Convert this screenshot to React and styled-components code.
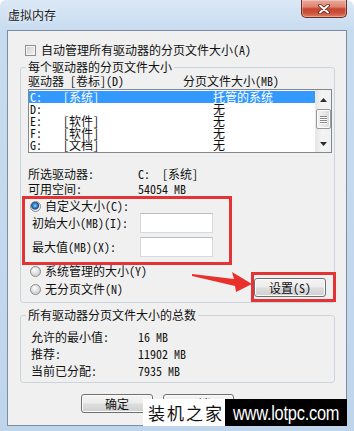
import React from "react";
import styled, { createGlobalStyle } from "styled-components";

const FONT = `"Noto Sans Mono CJK SC", "Noto Sans CJK SC", "DejaVu Sans", sans-serif`;
const RED = "#e23434";

const Global = createGlobalStyle`
  html, body { margin: 0; padding: 0; background: #ffffff; }
  body { width: 354px; height: 431px; overflow: hidden; font-family: ${FONT}; font-size: 12px; color: #111; }
  * { box-sizing: border-box; }
`;

const Window = styled.div`
  position: relative;
  width: 354px;
  height: 431px;
  display: flex;
  flex-direction: column;
  background: linear-gradient(180deg, #dbe8f6 0px, #c8dcf0 30px, #bfd5ec 100%);
  border-top-right-radius: 8px;
  border-top-left-radius: 6px;
  overflow: hidden;
`;

const TitleBar = styled.div`
  height: 30px;
  flex: none;
  display: flex;
  justify-content: space-between;
  align-items: flex-start;
  padding: 0 7px 0 8px;
`;

const Title = styled.div`
  line-height: 30px;
  font-size: 12px;
  color: #1a1a1a;
  text-shadow: 0 0 4px rgba(255, 255, 255, 0.9);
`;

const CloseButton = styled.div`
  width: 46px;
  height: 18px;
  border: 1px solid #6d2e26;
  border-top: none;
  border-radius: 0 0 5px 5px;
  background: linear-gradient(180deg, #eaa99b 0%, #de8572 40%, #c8452f 52%, #cc5039 75%, #dd8068 100%);
  box-shadow: inset 0 0 0 1px rgba(255, 255, 255, 0.3);
  display: flex;
  align-items: center;
  justify-content: center;
`;

const Client = styled.div`
  flex: 1;
  margin: 0 7px 5px 7px;
  border: 1px solid #7b8ea3;
  background: #f0f0f0;
  padding: 0 11px 0 12px;
  display: flex;
  flex-direction: column;
`;

const CheckRow = styled.div`
  margin: 12px 0 0 5px;
  height: 14px;
  line-height: 14px;
  display: flex;
  align-items: center;
  gap: 5px;
`;

const CheckBox = styled.span`
  width: 11px;
  height: 11px;
  flex: none;
  border: 1px solid #8e8f8f;
  background: linear-gradient(135deg, #cfcfcf 0%, #e6e6e6 60%, #f4f4f4 100%);
  box-shadow: inset 0 0 0 1px #f4f4f4;
`;

const Group = styled.fieldset`
  margin: ${(p) => p.$top}px 0 0 0;
  padding: 0;
  border: 1px solid #cdd5dc;
  border-radius: 3px;
  min-width: 0;
`;

const Legend = styled.legend`
  margin-left: 5px;
  padding: 0 2px;
  line-height: 12px;
  font-size: 12px;
`;

const GroupBody = styled.div`
  display: flex;
  flex-direction: column;
  padding: ${(p) => p.$pad};
`;

const Header = styled.div`
  display: grid;
  grid-template-columns: 155px 1fr;
  height: 12px;
  line-height: 12px;
  white-space: pre;
`;

const ListBox = styled.div`
  margin: 2px 1px 0 0;
  height: 64px;
  border: 1px solid #828790;
  background: #fff;
  display: flex;
`;

const Rows = styled.div`
  flex: 1;
  padding-top: 1px;
`;

const Row = styled.div`
  display: grid;
  grid-template-columns: 33px 150px 1fr;
  height: 12px;
  line-height: 12px;
  padding-left: 1px;
  white-space: pre;
  background: ${(p) => (p.$selected ? "#3399ff" : "transparent")};
  color: ${(p) => (p.$selected ? "#ffffff" : "#111")};
`;

const ScrollBar = styled.div`
  width: 16px;
  flex: none;
  display: flex;
  flex-direction: column;
  background: linear-gradient(90deg, #e6e6e6, #f4f4f4 40%, #f0f0f0);
  border-left: 1px solid #eaeaea;
`;

const ScrollButton = styled.div`
  height: 17px;
  flex: none;
  display: flex;
  align-items: center;
  justify-content: center;
  padding-top: ${(p) => (p.$up ? 3 : 0)}px;
`;

const Thumb = styled.div`
  margin: 2px 0 0 0;
  height: 20px;
  border: 1px solid #989898;
  border-radius: 2px;
  background: linear-gradient(90deg, #f4f4f4 0%, #e8e8e8 50%, #d9d9d9 100%);
  box-shadow: inset 0 0 0 1px #fbfbfb;
  display: flex;
  flex-direction: column;
  align-items: center;
  justify-content: center;
  gap: 1px;
`;

const Grip = styled.span`
  width: 7px;
  height: 1px;
  background: #8a8a8a;
  box-shadow: 0 1px 0 #ffffff;
`;

const Spacer = styled.div`
  flex: 1;
`;

const Info = styled.div`
  margin-top: 13px;
  display: grid;
  grid-template-columns: 110px 1fr;
  grid-auto-rows: 15px;
  line-height: 15px;
  white-space: pre;
`;

const CustomBox = styled.div`
  margin-left: -6px;
  width: 210px;
  border: 3px solid ${RED};
  padding: 0 16px 5px 5px;
  display: flex;
  flex-direction: column;
`;

const RadioRow = styled.div`
  height: ${(p) => p.$h}px;
  line-height: ${(p) => p.$h}px;
  display: flex;
  align-items: center;
  gap: 4px;
`;

const Radio = styled.span`
  width: 11px;
  height: 11px;
  flex: none;
  border-radius: 50%;
  border: 1px solid #8a8a8a;
  background: ${(p) =>
    p.$on
      ? "radial-gradient(circle at 45% 40%, #9fd0f7 0, #3d86cf 2px, #164f93 3.5px, #e9e9e9 4.5px, #f7f7f7 100%)"
      : "radial-gradient(circle at 40% 35%, #ffffff 0, #eeeeee 2px, #d4d4d4 5px)"};
`;

const FieldRow = styled.div`
  display: grid;
  grid-template-columns: 108px 73px;
  height: 20px;
  margin: ${(p) => p.$top}px 0 0 2px;
  align-items: center;
  line-height: 14px;
`;

const TextInput = styled.div`
  height: 20px;
  background: #fff;
  border: 1px solid #d6dbe0;
  border-top-color: #b8bec6;
`;

const BottomRow = styled.div`
  display: flex;
  justify-content: space-between;
  align-items: flex-start;
  margin: -3px -3px 0 0;
`;

const RadioList = styled.div`
  margin-left: 2px;
  display: flex;
  flex-direction: column;
`;

const SetBox = styled.div`
  margin-top: 10px;
  border: 3px solid ${RED};
  padding: 3px 7px 2px 0;
`;

const Button = styled.div`
  width: ${(p) => p.$w}px;
  height: 19px;
  border: 1px solid #707070;
  border-radius: 3px;
  background: linear-gradient(180deg, #f4f4f4 0%, #ececec 48%, #dedede 52%, #d0d0d0 100%);
  box-shadow: inset 0 0 0 1px #fbfbfb;
  display: flex;
  align-items: center;
  justify-content: center;
  line-height: 17px;
  color: #111;
`;

const Totals = styled.div`
  display: grid;
  grid-template-columns: 107px 1fr;
  grid-auto-rows: 17px;
  line-height: 17px;
  white-space: pre;
`;

const ButtonRow = styled.div`
  margin-top: 11px;
  padding-left: 61px;
  display: flex;
  gap: 10px;
`;

const Arrow = styled.svg`
  position: absolute;
  left: 188px;
  top: 268px;
`;

const Watermark = styled.div`
  position: absolute;
  left: 143px;
  top: 399px;
  width: 204px;
  height: 27px;
  display: flex;
`;

const WhiteTag = styled.div`
  width: 82px;
  background: #fff;
  color: #111;
  font-family: "Noto Sans CJK SC", sans-serif;
  font-size: 17px;
  letter-spacing: 2px;
  line-height: 27px;
  padding-left: 5px;
  white-space: nowrap;
`;

const BlackTag = styled.div`
  flex: 1;
  background: #000;
  color: #fff;
  overflow: hidden;
  line-height: 27px;
  padding-left: 8px;
`;

const Url = styled.span`
  display: inline-block;
  font-family: "Liberation Sans Narrow", "Liberation Sans", sans-serif;
  font-size: 21px;
  letter-spacing: -0.3px;
  transform: scaleX(0.78);
  transform-origin: left center;
  white-space: nowrap;
`;

const drives = [
  { d: "C:", l: "[系统]", s: "托管的系统", sel: true },
  { d: "D:", l: "", s: "无" },
  { d: "E:", l: "[软件]", s: "无" },
  { d: "F:", l: "[软件]", s: "无" },
  { d: "G:", l: "[文档]", s: "无" },
];

export default function App() {
  return (
    <>
      <Global />
      <Window>
        <TitleBar>
          <Title>虚拟内存</Title>
          <CloseButton>
            <svg width="12" height="10" viewBox="0 0 12 10">
              <path d="M2 1.5 L10 8.5 M10 1.5 L2 8.5" stroke="#5a2018" strokeWidth="3.6" strokeLinecap="round" />
              <path d="M2 1.5 L10 8.5 M10 1.5 L2 8.5" stroke="#ffffff" strokeWidth="2" strokeLinecap="round" />
            </svg>
          </CloseButton>
        </TitleBar>
        <Client>
          <CheckRow>
            <CheckBox />
            <span>自动管理所有驱动器的分页文件大小(A)</span>
          </CheckRow>

          <Group $top={4}>
            <Legend>每个驱动器的分页文件大小</Legend>
            <GroupBody $pad="2px 1px 0 7px">
              <Header>
                <span>驱动器 [卷标](D)</span>
                <span>分页文件大小(MB)</span>
              </Header>
              <ListBox>
                <Rows>
                  {drives.map((r) => (
                    <Row key={r.d} $selected={r.sel}>
                      <span>{r.d}</span>
                      <span>{r.l}</span>
                      <span>{r.s}</span>
                    </Row>
                  ))}
                </Rows>
                <ScrollBar>
                  <ScrollButton $up>
                    <svg width="7" height="4" viewBox="0 0 7 4">
                      <polygon points="0,4 3.5,0 7,4" fill="#2b2b2b" />
                    </svg>
                  </ScrollButton>
                  <Thumb>
                    <Grip />
                    <Grip />
                    <Grip />
                    <Grip />
                  </Thumb>
                  <Spacer />
                  <ScrollButton>
                    <svg width="7" height="4" viewBox="0 0 7 4">
                      <polygon points="0,0 7,0 3.5,4" fill="#2b2b2b" />
                    </svg>
                  </ScrollButton>
                </ScrollBar>
              </ListBox>

              <Info>
                <span>所选驱动器:</span>
                <span>C:  [系统]</span>
                <span>可用空间:</span>
                <span>54054 MB</span>
              </Info>

              <CustomBox>
                <RadioRow $h={14}>
                  <Radio $on />
                  <span>自定义大小(C):</span>
                </RadioRow>
                <FieldRow $top={0}>
                  <span>初始大小(MB)(I):</span>
                  <TextInput />
                </FieldRow>
                <FieldRow $top={4}>
                  <span>最大值(MB)(X):</span>
                  <TextInput />
                </FieldRow>
              </CustomBox>

              <BottomRow>
                <RadioList>
                  <RadioRow $h={18}>
                    <Radio />
                    <span>系统管理的大小(Y)</span>
                  </RadioRow>
                  <RadioRow $h={18}>
                    <Radio />
                    <span>无分页文件(N)</span>
                  </RadioRow>
                </RadioList>
                <SetBox>
                  <Button $w={72}>设置(S)</Button>
                </SetBox>
              </BottomRow>
            </GroupBody>
          </Group>

          <Group $top={6}>
            <Legend>所有驱动器分页文件大小的总数</Legend>
            <GroupBody $pad="7px 0 3px 10px">
              <Totals>
                <span>允许的最小值:</span>
                <span>16 MB</span>
                <span>推荐:</span>
                <span>11902 MB</span>
                <span>当前已分配:</span>
                <span>7935 MB</span>
              </Totals>
            </GroupBody>
          </Group>

          <ButtonRow>
            <Button $w={72}>确定</Button>
            <Button $w={71}>取消</Button>
          </ButtonRow>
        </Client>

        <Arrow width="68" height="28" viewBox="0 0 68 28">
          <polygon points="4,6 46,11 44,4 64,16 48,24 47,18 4,8" fill="#e8302c" />
        </Arrow>

        <Watermark>
          <WhiteTag>装机之家</WhiteTag>
          <BlackTag>
            <Url>www.lotpc.com</Url>
          </BlackTag>
        </Watermark>
      </Window>
    </>
  );
}
